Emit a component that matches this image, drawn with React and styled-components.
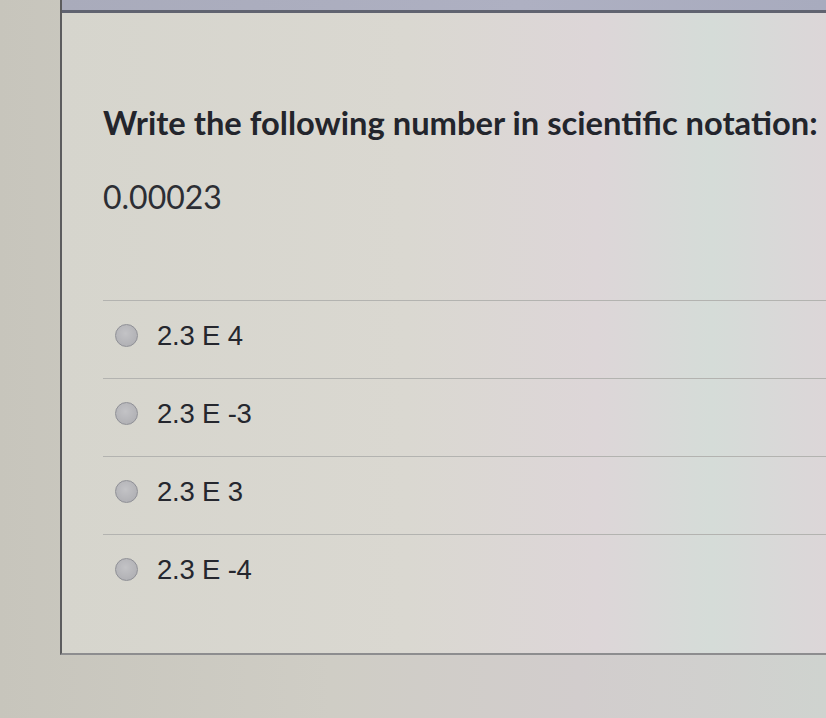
import React from "react";
import styled, { createGlobalStyle } from "styled-components";

const Global = createGlobalStyle`
  html, body { margin: 0; padding: 0; }
  body { background: #cbc9c0; font-family: "Lato", "Liberation Sans", sans-serif; overflow: hidden; }
`;

const Page = styled.div`
  display: flex;
  width: 826px;
  height: 718px;
  background: linear-gradient(90deg, #c7c5bc 0%, #cfcdc5 40%, #d2cdcd 70%, #cfd3cf 100%);
`;

const Gutter = styled.div`
  width: 60px;
  flex: none;
`;

const Card = styled.div`
  flex: 1;
  height: 653px;
  border-left: 2px solid #5c5c5e;
  border-bottom: 2px solid #8d8d8f;
  background: linear-gradient(90deg, #d6d5cd 0%, #dad8d1 45%, #ddd6d8 70%, #d5dcd8 85%, #dcd6d8 100%);
  display: flex;
  flex-direction: column;
`;

const TopBar = styled.div`
  height: 10px;
  background: linear-gradient(90deg, #a9abbb 0%, #aeb0c2 60%, #a8abbe 100%);
  border-bottom: 3px solid #606370;
  flex: none;
`;

const Body = styled.div`
  padding: 0 0 0 41px;
  display: flex;
  flex-direction: column;
`;

const Question = styled.h1`
  margin: 90px 0 0 0;
  font-family: "Lato", sans-serif;
  font-weight: 700;
  font-size: 32.7px;
  line-height: 40px;
  color: #23252c;
  white-space: nowrap;
`;

const Value = styled.div`
  margin-top: 36px;
  font-family: "Lato", sans-serif;
  font-size: 32px;
  line-height: 36px;
  color: #2c2e34;
`;

const Options = styled.div`
  margin-top: 85px;
  display: flex;
  flex-direction: column;
`;

const Row = styled.label`
  height: 78px;
  box-sizing: border-box;
  padding: 0 0 8px 12px;
  border-top: 1.5px solid #b3b3b0;
  display: flex;
  align-items: center;
  gap: 19px;
`;

const Radio = styled.span`
  width: 23px;
  height: 23px;
  border-radius: 50%;
  background: radial-gradient(circle at 45% 40%, #c3c3c6 0%, #b2b2b6 70%, #a2a2a8 100%);
  border: 1.5px solid #8f9096;
  box-sizing: border-box;
  flex: none;
`;

const OptionText = styled.span`
  font-family: "Liberation Sans", Arial, sans-serif;
  font-size: 27.5px;
  color: #25272e;
  letter-spacing: -0.2px;
`;

const options = ["2.3 E 4", "2.3 E -3", "2.3 E 3", "2.3 E -4"];

export default function App() {
  return (
    <>
      <Global />
      <Page>
        <Gutter />
        <Card>
          <TopBar />
          <Body>
            <Question>Write the following number in scientific notation:</Question>
            <Value>0.00023</Value>
            <Options>
              {options.map((o) => (
                <Row key={o}>
                  <Radio />
                  <OptionText>{o}</OptionText>
                </Row>
              ))}
            </Options>
          </Body>
        </Card>
      </Page>
    </>
  );
}
